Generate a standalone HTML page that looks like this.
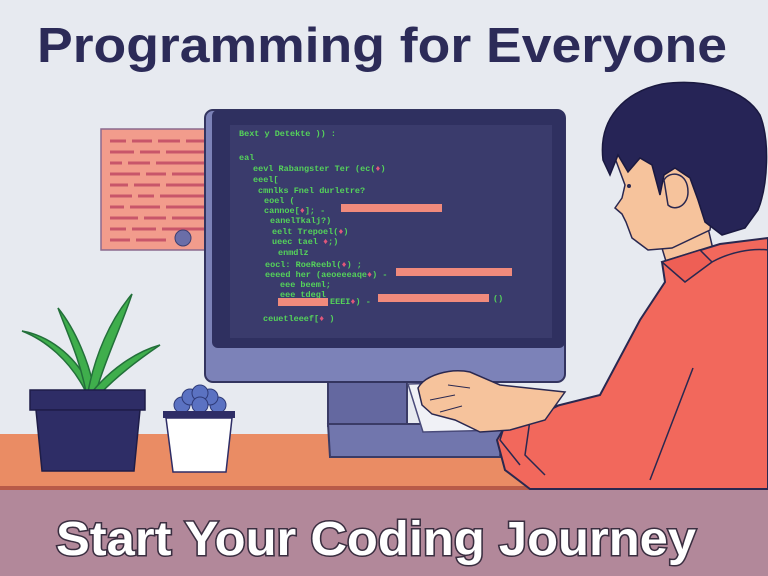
<!DOCTYPE html>
<html><head><meta charset="utf-8"><style>
html,body{margin:0;padding:0;width:768px;height:576px;overflow:hidden;background:#e7eaf0}
svg{display:block}
</style></head><body>
<svg width="768" height="576" viewBox="0 0 768 576" xmlns="http://www.w3.org/2000/svg">
<rect width="768" height="576" fill="#e7eaf0"/>
<text x="382" y="62" text-anchor="middle" font-family="Liberation Sans, sans-serif" font-weight="bold" font-size="49" fill="#2c2b58" textLength="690" lengthAdjust="spacingAndGlyphs">Programming for Everyone</text>

<!-- poster -->
<rect x="101" y="129" width="106" height="121" fill="#f29c8c" stroke="#8b6a8e" stroke-width="1.5"/>
<g stroke="#c8566a" stroke-width="3">
<path d="M110 141h16M132 141h20M158 141h22M186 141h18"/>
<path d="M110 152h24M140 152h20M166 152h38"/>
<path d="M110 163h12M128 163h22M156 163h48"/>
<path d="M110 174h30M146 174h20M172 174h32"/>
<path d="M110 185h18M134 185h26M166 185h38"/>
<path d="M110 196h22M138 196h16M160 196h44"/>
<path d="M110 207h14M130 207h30M166 207h38"/>
<path d="M110 218h28M144 218h22M172 218h32"/>
<path d="M110 229h16M132 229h24M162 229h42"/>
<path d="M110 240h20M136 240h30"/>
</g>
<circle cx="183" cy="238" r="8" fill="#6a6ea8" stroke="#3e3f70"/>

<!-- desk -->
<rect x="0" y="434" width="768" height="55" fill="#ea8c64"/>
<rect x="0" y="486" width="768" height="4" fill="#b85a48"/>
<rect x="0" y="490" width="768" height="86" fill="#b2889a"/>

<!-- monitor stand -->
<path d="M328 376h79v50h-79z" fill="#6468a0" stroke="#3a3b66" stroke-width="2"/>
<path d="M328 424h175l-3 33h-170z" fill="#7176ad" stroke="#3a3b66" stroke-width="2"/>
<!-- monitor -->
<rect x="205" y="110" width="360" height="272" rx="8" fill="#7c82b8" stroke="#33345f" stroke-width="2"/>
<rect x="212" y="110" width="353" height="238" rx="6" fill="#2f3060"/>
<rect x="230" y="125" width="322" height="213" fill="#3a3b6c"/>

<g font-family="Liberation Mono, monospace" font-weight="bold" font-size="8.5" fill="#55d35a">
<text x="239" y="136">Bext y Detekte )) :</text>
<text x="239" y="160">eal</text>
<text x="253" y="171">eevl Rabangster Ter (ec(<tspan fill="#e0577a">♦</tspan>)</text>
<text x="253" y="182">eeel[</text>
<text x="258" y="193">cmnlks Fnel durletre?</text>
<text x="264" y="203">eoel (</text>
<text x="264" y="213">cannoe[<tspan fill="#e0577a">♦</tspan>]; -</text>
<text x="270" y="223">eanelTkalj?)</text>
<text x="272" y="234">eelt Trepoel(<tspan fill="#e0577a">♦</tspan>)</text>
<text x="272" y="244">ueec tael <tspan fill="#e0577a">♦</tspan>;)</text>
<text x="278" y="255">enmdlz</text>
<text x="265" y="267">eocl: RoeReebl(<tspan fill="#e0577a">♦</tspan>) ;</text>
<text x="265" y="277">eeeed her (aeoeeeaqe<tspan fill="#e0577a">♦</tspan>) -</text>
<text x="280" y="287">eee beeml;</text>
<text x="280" y="297">eee tdegl</text>
<text x="330" y="304">EEEI<tspan fill="#e0577a">♦</tspan>) -</text>
<text x="263" y="321">ceuetleeef[<tspan fill="#e0577a">♦</tspan> )</text>
<text x="493" y="301">()</text>
</g>
<g fill="#f08a7c">
<rect x="341" y="204" width="101" height="8"/>
<rect x="396" y="268" width="116" height="8"/>
<rect x="378" y="294" width="111" height="8"/>
<rect x="278" y="298" width="50" height="8"/>
</g>

<!-- keyboard -->
<path d="M408 384l75 -2l20 48l-80 2z" fill="#f0f1f6" stroke="#4a4b7a" stroke-width="1.5"/>

<!-- plant -->
<g fill="#3fae4c" stroke="#23703a" stroke-width="1.5">
<path d="M86 392C70 360 45 340 22 331C45 335 75 352 92 390z"/>
<path d="M86 392C80 360 68 335 58 308C76 330 90 365 94 390z"/>
<path d="M88 392C95 355 110 320 132 294C120 330 105 360 96 392z"/>
<path d="M92 392C110 370 135 352 160 345C135 362 115 378 100 394z"/>
</g>
<path d="M30 390h115v20h-115z" fill="#2e2d66" stroke="#1e1d48" stroke-width="1.5"/>
<path d="M36 410h104l-6 61h-92z" fill="#2e2d66" stroke="#1e1d48" stroke-width="1.5"/>
<!-- cup -->
<g fill="#5b72c2" stroke="#2e3a78" stroke-width="1">
<circle cx="182" cy="405" r="8"/><circle cx="218" cy="405" r="8"/>
<circle cx="190" cy="397" r="8"/><circle cx="210" cy="397" r="8"/>
<circle cx="200" cy="393" r="8"/><circle cx="200" cy="405" r="8"/>
</g>
<rect x="163" y="411" width="72" height="7" fill="#2e2d66"/>
<path d="M166 418h66l-6 54h-53z" fill="#ffffff" stroke="#2e2d66" stroke-width="1.5"/>

<!-- person -->
<path d="M655 225L705 215L715 258L668 268z" fill="#f6c39c" stroke="#2a2850" stroke-width="1.5"/>
<path d="M768 238L720 244L662 262L665 282L640 320L600 395L560 405L510 418L497 440L505 470L530 489L768 489z" fill="#f2685c" stroke="#2a2850" stroke-width="2"/>
<path d="M662 262L700 250L712 262L685 282z" fill="#ee5f55" stroke="#2a2850" stroke-width="1.5"/>
<path d="M712 262C730 252 752 248 768 250" fill="none" stroke="#2a2850" stroke-width="1.5"/>
<path d="M693 368L650 480" fill="none" stroke="#2a2850" stroke-width="1.5"/>
<path d="M540 398L510 408L500 440L520 465" fill="none" stroke="#2a2850" stroke-width="1.5"/>
<path d="M560 405L530 420L525 455L545 475" fill="none" stroke="#2a2850" stroke-width="1.5"/>
<path d="M418 388C425 375 450 368 470 372L500 385L565 392L545 420L510 430L480 432L455 420L432 414L422 405z" fill="#f6c39c" stroke="#2a2850" stroke-width="1.5"/>
<path d="M430 400L455 395M440 412L462 406M448 385L470 388" stroke="#2a2850" stroke-width="1" fill="none"/>
<path d="M612 150L625 185L622 198L615 208L622 214L626 222L632 238L648 250L672 248L710 230L720 160L660 130z" fill="#f6c39c" stroke="#2a2850" stroke-width="1.5"/>
<path d="M603 160C598 118 625 92 662 84C705 78 745 90 760 115C770 140 768 185 758 210L745 228L722 235L705 222L698 200L690 178L675 168L664 175L660 195L652 165L640 158L628 172L618 155L610 175z" fill="#262456" stroke="#1a1940" stroke-width="1.5"/>
<path d="M664 180C670 170 688 172 688 192C688 205 676 212 668 205z" fill="#f6c39c" stroke="#2a2850" stroke-width="1.5"/>
<circle cx="629" cy="186" r="2" fill="#2a2850"/>

<text x="376" y="555" text-anchor="middle" font-family="Liberation Sans, sans-serif" font-weight="bold" font-size="48" fill="#ffffff" stroke="#3a2e40" stroke-width="3" paint-order="stroke" textLength="640" lengthAdjust="spacingAndGlyphs">Start Your Coding Journey</text>
</svg>
</body></html>
